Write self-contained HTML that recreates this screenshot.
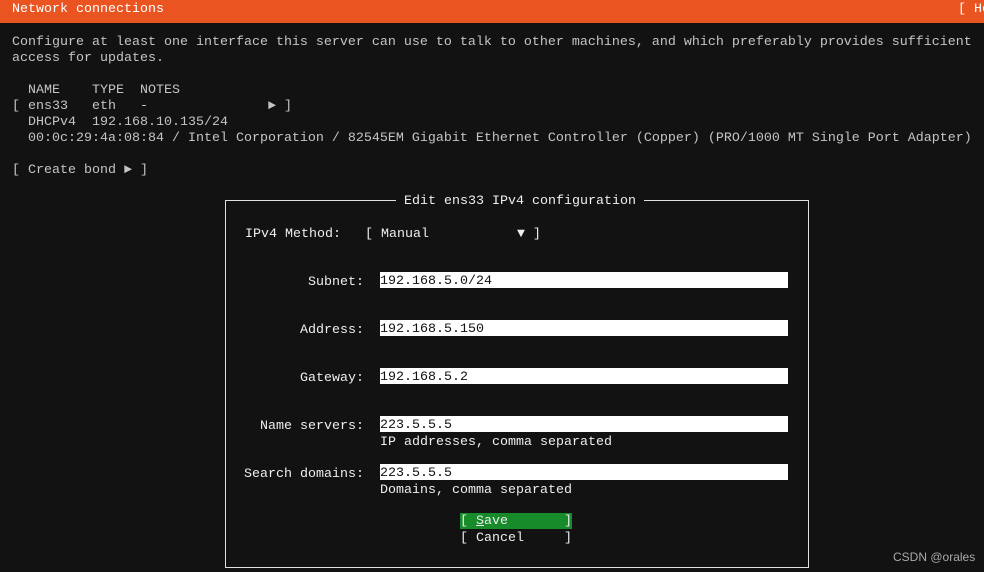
<!DOCTYPE html>
<html><head><meta charset="utf-8"><style>
*{margin:0;padding:0;box-sizing:border-box}
body{width:984px;height:572px;background:#121212;overflow:hidden;position:relative;font-family:"Liberation Mono","DejaVu Sans Mono",monospace;font-size:13.33px;line-height:16px;color:#c4c4c4}
.hdr{position:absolute;left:0;top:0;width:984px;height:23px;background:#e95420}
.t{position:absolute;white-space:pre}
pre{font:inherit;position:absolute;left:12px;top:35px;white-space:pre}
.box{position:absolute;left:225px;top:200px;width:584px;height:368px;border:1px solid #e0e0e0}
.w{color:#eee}
.inp{position:absolute;left:380px;width:408px;height:16px;background:#fff;color:#111;white-space:pre;padding-top:2px;line-height:15px}
.lbl{position:absolute;width:120px;text-align:right;left:244px;color:#eee;white-space:pre}
</style></head><body>
<div class="hdr"></div>
<div class="t" style="left:12px;top:2px;color:#fff">Network connections</div>
<div class="t" style="left:958px;top:2px;color:#fff">[ He</div>
<pre>Configure at least one interface this server can use to talk to other machines, and which preferably provides sufficient
access for updates.

  NAME    TYPE  NOTES
[ ens33   eth   -               ► ]
  DHCPv4  192.168.10.135/24
  00:0c:29:4a:08:84 / Intel Corporation / 82545EM Gigabit Ethernet Controller (Copper) (PRO/1000 MT Single Port Adapter)

[ Create bond ► ]</pre>
<div class="box"></div>
<div class="t w" style="left:396px;top:194px;background:#121212;padding:0 8px">Edit ens33 IPv4 configuration</div>
<div class="t w" style="left:245px;top:227px">IPv4 Method:   [ Manual           ▼ ]</div>
<div class="lbl" style="top:275px">Subnet:</div><div class="inp" style="top:272px">192.168.5.0/24</div>
<div class="lbl" style="top:323px">Address:</div><div class="inp" style="top:320px">192.168.5.150</div>
<div class="lbl" style="top:371px">Gateway:</div><div class="inp" style="top:368px">192.168.5.2</div>
<div class="lbl" style="top:419px">Name servers:</div><div class="inp" style="top:416px">223.5.5.5</div>
<div class="t w" style="left:380px;top:435px">IP addresses, comma separated</div>
<div class="lbl" style="top:467px">Search domains:</div><div class="inp" style="top:464px">223.5.5.5</div>
<div class="t w" style="left:380px;top:483px">Domains, comma separated</div>
<div class="t" style="left:460px;top:513px;width:112px;height:16px;background:#178a2a;color:#eee;padding-top:2px;line-height:14px">[ <u>S</u>ave       ]</div>
<div class="t w" style="left:460px;top:531px">[ Cancel     ]</div>
<div class="t" style="left:893px;top:549px;font-family:'Liberation Sans',sans-serif;font-size:12px;color:#aaa">CSDN @orales</div>
</body></html>
